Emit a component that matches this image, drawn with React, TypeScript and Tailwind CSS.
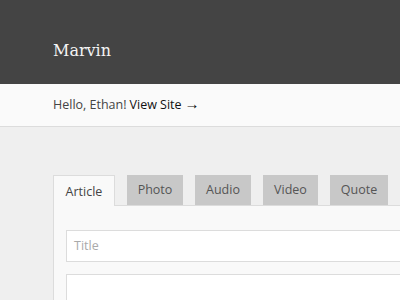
import React from "react";

export default function App() {
  const tabs = [
    { label: "Photo", w: "w-[56px]" },
    { label: "Audio", w: "w-[56px]" },
    { label: "Video", w: "w-[55px]" },
    { label: "Quote", w: "w-[58px]" },
  ];
  return (
    <div
      className="w-[400px] h-[300px] overflow-hidden bg-[#efefef]"
      style={{ fontFamily: '"Open Sans", "Noto Sans", "Liberation Sans", sans-serif' }}
    >
      <div className="h-[84px] bg-[#444444] pl-[53px] pt-[41px]">
        <div
          className="text-[16px] leading-[20px] text-[#f4f4f4]"
          style={{ fontFamily: '"DejaVu Serif", "Liberation Serif", serif' }}
        >
          Marvin
        </div>
      </div>
      <div className="h-[43px] bg-[#fafafa] border-b border-[#dcdcdc] pl-[53px] flex items-center text-[12.5px] pt-[1px]">
        <span className="text-[#444]">Hello, Ethan!</span>
        <span className="ml-[3px] text-[#111]">View Site</span>
        <span
          className="ml-[3px] text-[15px] leading-[15px] text-[#111] pb-[5px]"
          style={{ fontFamily: '"Liberation Sans", sans-serif' }}
        >
          →
        </span>
      </div>
      <div className="ml-[53px] mt-[48px] w-[500px]">
        <div className="flex items-end gap-[12px] h-[30px]">
          <div className="w-[62px] h-[31px] -mb-[1px] relative z-10 bg-[#f9f9f9] border border-b-0 border-[#dcdcdc] flex items-center justify-center text-[12.5px] text-[#444] pt-[2px]">
            Article
          </div>
          {tabs.map((t) => (
            <div
              key={t.label}
              className={`${t.w} h-[30px] bg-[#c8c8c8] flex items-center justify-center text-[12.5px] text-[#555] pt-[1px]`}
            >
              {t.label}
            </div>
          ))}
        </div>
        <div className="bg-[#f9f9f9] border-l border-t border-[#dcdcdc] pl-[12px] pt-[24px] h-[200px]">
          <div className="h-[32px] bg-white border border-[#dcdcdc] flex items-center pl-[7px] text-[12.5px] text-[#aaaaaa]">
            Title
          </div>
          <div className="mt-[12px] h-[120px] bg-white border border-[#dcdcdc]"></div>
        </div>
      </div>
    </div>
  );
}
